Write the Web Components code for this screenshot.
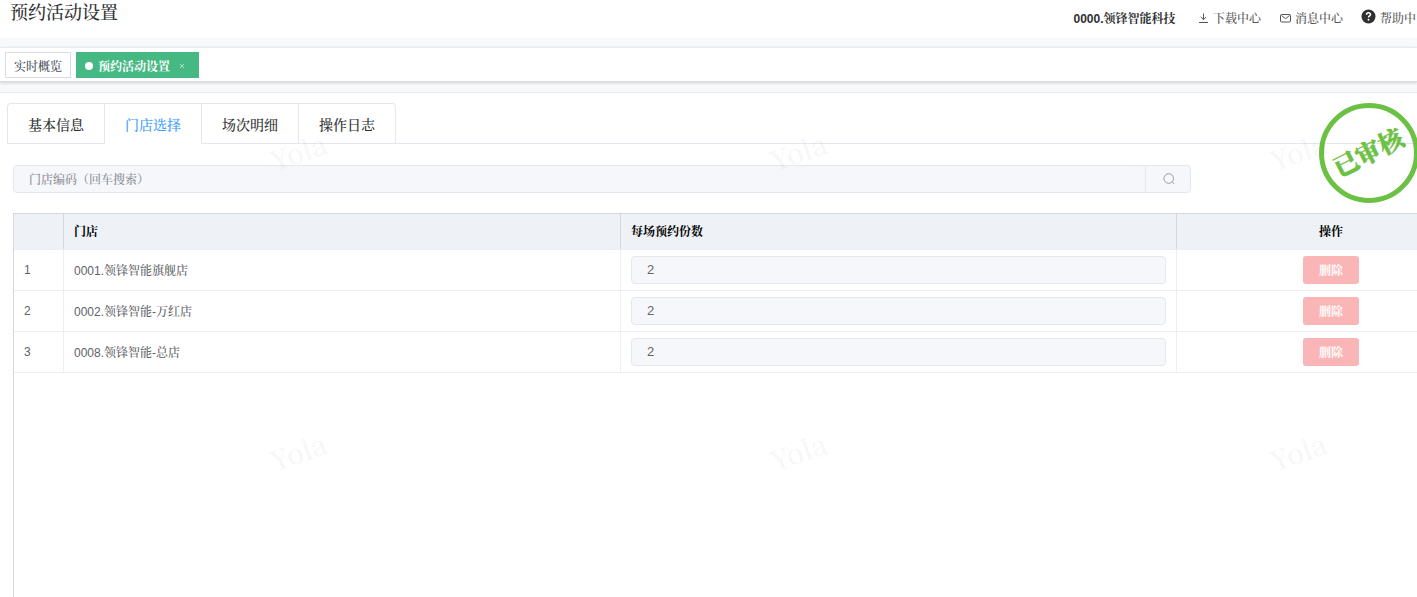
<!DOCTYPE html>
<html lang="zh-CN">
<head>
<meta charset="utf-8">
<title>预约活动设置</title>
<style>
html,body{margin:0;height:100%;overflow:hidden;background:#fff}
body{font-family:"Liberation Sans","Noto Serif CJK SC","Noto Sans CJK SC",sans-serif;font-size:12px;font-weight:500;color:#303133}
</style>
</head>
<body>
<activity-page></activity-page>
<script>
const define = (name, html) => customElements.define(name, class extends HTMLElement {
  constructor() {
    super();
    this.attachShadow({ mode: 'open' }).innerHTML = '<style>*{box-sizing:border-box}</style>' + html(this);
  }
});

define('header-link', () => `
<style>
:host{display:flex;align-items:center;color:#555;height:18px;line-height:18px;white-space:nowrap}
::slotted(svg){display:block;flex:none}
</style><slot name="icon"></slot><slot></slot>`);

define('app-header', () => `
<style>
:host{display:flex;justify-content:space-between;height:38px;background:#fff;overflow:hidden}
h1{margin:0;padding-left:10px;font-size:18px;line-height:27px;font-weight:500;color:#303133}
nav{display:flex;width:344px;padding-top:10px;flex:none}
b{width:125px;line-height:18px;flex:none;color:#303133;padding-left:.5px}
header-link{flex:none}
.d{width:82px}.m{width:81px}
.d svg{margin:-2px 4px 0 0}.m svg{margin:-3px 4px 0 0}.h svg{margin:-5px 4px 0 0}
</style>
<h1>预约活动设置</h1>
<nav><b>0000.领锋智能科技</b>
<header-link class="d"><svg slot="icon" width="11" height="12" viewBox="0 0 11 12" fill="none" stroke="#555"><path d="M5.5 1.5v6M2.7 4.9l2.8 2.8 2.8-2.8M1 10.5h9"/></svg>下载中心</header-link>
<header-link class="m"><svg slot="icon" width="11" height="12" viewBox="0 0 11 12" fill="none" stroke="#555"><rect x=".5" y="2.5" width="10" height="7.5" rx="1"/><path d="M1.5 3.5l4 3.2 4-3.2"/></svg>消息中心</header-link>
<header-link class="h"><svg slot="icon" width="15" height="15" viewBox="0 0 15 15"><circle cx="7.5" cy="7.5" r="7" fill="#303030"/><path d="M5.5 5.8c0-2.6 4-2.6 4-.2 0 1.3-2 1.4-2 3" fill="none" stroke="#fff" stroke-width="1.5"/><circle cx="7.5" cy="10.8" r=".95" fill="#fff"/></svg>帮助中</header-link>
</nav>`);

define('view-tag', () => `
<style>
:host{display:flex;align-items:center;height:26px;border:1px solid #d8dce5;padding:0 8px;color:#495060;background:#fff;white-space:nowrap}
:host([active]){background:#46b883;border-color:#46b883;color:#fff;font-weight:700;padding-right:13px}
i{display:none;width:8px;height:8px;border-radius:50%;background:#fff;margin:1px 5px 0 0}
svg{display:none;margin:1px 0 0 9px}
:host([active]) i,:host([active]) svg{display:block}
slot{display:block;line-height:18px;padding-top:3px}
</style><i></i><slot></slot><svg width="6" height="6" viewBox="0 0 6 6" stroke="#c3e8d7" stroke-width=".8"><path d="M1 1l4 4M5 1L1 5"/></svg>`);

define('tags-view', () => `
<style>
:host{display:flex;gap:5px;height:35px;padding:4px 5px;background:#fff;border-top:1px solid #e9edf2;border-bottom:1px solid #d8dce5;box-shadow:0 1px 3px rgba(0,0,0,.16)}
</style><slot></slot>`);

define('page-tab', () => `
<style>
:host{display:block;box-sizing:border-box;width:97px;height:41px;border-right:1px solid #e4e7ed;border-bottom:1px solid #e4e7ed;text-align:center;font-size:14px;line-height:42px;color:#303133}
:host([active]){color:#409eff;border-bottom-color:#fff}
</style><slot></slot>`);

define('page-tabs', () => `
<style>
:host{display:flex;height:41px;margin-left:7px;background:linear-gradient(#e4e7ed,#e4e7ed) 0 100%/100% 1px no-repeat}
div{display:flex;height:41px;border-left:1px solid #e4e7ed;border-top:1px solid #e4e7ed;border-radius:4px 4px 0 0;overflow:hidden}
::slotted(page-tab){height:40px}
::slotted(page-tab:last-child){border-top-right-radius:4px}
</style><div><slot></slot></div>`);

define('search-field', () => `
<style>
:host{display:flex;width:1178px;height:28px;margin:21px 0 0 13px;border:1px solid #e4e7ed;border-radius:4px;background:#f5f7fa;color:#8a8d93;line-height:28px;box-sizing:border-box}
span{flex:1;padding-left:15px}
div{width:45px;border-left:1px solid #e4e7ed;display:flex;align-items:center;justify-content:center}
svg{margin-left:1px}
</style><span><slot></slot></span><div><svg width="12" height="12" viewBox="0 0 12 12" fill="none" stroke="#909399" stroke-width=".9"><circle cx="5.7" cy="5.5" r="4.8"/><path d="M9.2 9l1.8 1.8"/></svg></div>`);

define('count-input', () => `
<style>
:host{display:block;flex:1;height:28px;border:1px solid #e4e7ed;border-radius:4px;background:#f5f7fa;color:#666;padding-left:15px;line-height:26px;font-size:13px;box-sizing:border-box}
</style><slot></slot>`);

define('delete-button', () => `
<style>
:host{display:block;width:56px;height:28px;border-radius:3px;background:#fab6b6;color:#fff;text-align:center;line-height:30px;font-weight:700}
</style><slot></slot>`);

define('store-row', () => `
<style>
:host{display:grid;grid-template-columns:50px 557px 556px 308px;height:41px;border-bottom:1px solid #ebeef5;color:#606266;box-sizing:border-box}
:host([head]){height:36px;background:#eef1f6;color:#000;font-weight:700;--line:#d5d7da}
div{display:flex;align-items:center;padding:0 10px;border-right:1px solid var(--line,#ebeef5)}
div:last-child{justify-content:center;border:0}
slot[name=store],:host([head]) slot{display:block;margin-top:-2px}
</style><div><slot name="no"></slot></div><div><slot name="store"></slot></div><div><slot name="count"></slot></div><div><slot name="op"></slot></div>`);

define('store-table', () => {
  const stores = ['0001.领锋智能旗舰店', '0002.领锋智能-万红店', '0008.领锋智能-总店'];
  return `
<style>
:host{display:block;flex:1;margin:20px 0 0 13px;border-left:1px solid #d5d7da;border-top:1px solid #d5d7da;overflow:hidden}
store-row{width:1471px}
count-input{flex:1}
</style>
<store-row head><span slot="store">门店</span><span slot="count">每场预约份数</span><span slot="op">操作</span></store-row>` +
  stores.map((s, i) => `<store-row><span slot="no">${i + 1}</span><span slot="store">${s}</span><count-input slot="count">2</count-input><delete-button slot="op">删除</delete-button></store-row>`).join('');
});

define('audit-stamp', () => `
<style>
:host{position:absolute;left:1319px;top:103px;width:100px;height:100px;border:5px solid #6cc144;border-radius:50%;display:flex;align-items:center;justify-content:center;color:#6cc144;font-size:25px;font-weight:900;box-sizing:border-box}
span{transform:rotate(-27deg);white-space:nowrap;line-height:30px;-webkit-text-stroke:.4px #6cc144}
</style><span><slot></slot></span>`);

define('water-mark', () => `
<style>
:host{position:absolute;left:48px;top:1px;width:1500px;height:600px;display:grid;grid-template-columns:repeat(3,500px);grid-template-rows:repeat(2,300px);pointer-events:none}
span{display:flex;align-items:center;justify-content:center;font:600 27.5px "Noto Serif CJK SC","Liberation Serif",serif;color:rgba(0,0,0,.055);transform:rotate(-20deg)}
</style>` + '<span>Yola</span>'.repeat(6));

define('activity-page', () => `
<style>
:host{display:flex;flex-direction:column;position:relative;height:597px;width:1417px;overflow:hidden;background:#f8f9fb}
tags-view{margin-top:9px;flex:none}
main{display:flex;flex-direction:column;flex:1;margin-top:10px;border-top:1px solid #e6ebf2;background:#fff;padding-top:10px}
</style>
<app-header></app-header>
<tags-view><view-tag>实时概览</view-tag><view-tag active>预约活动设置</view-tag></tags-view>
<main>
<page-tabs><page-tab>基本信息</page-tab><page-tab active>门店选择</page-tab><page-tab>场次明细</page-tab><page-tab>操作日志</page-tab></page-tabs>
<search-field>门店编码（回车搜索）</search-field>
<store-table></store-table>
</main>
<audit-stamp>已审核</audit-stamp>
<water-mark></water-mark>`);
</script>
</body>
</html>
